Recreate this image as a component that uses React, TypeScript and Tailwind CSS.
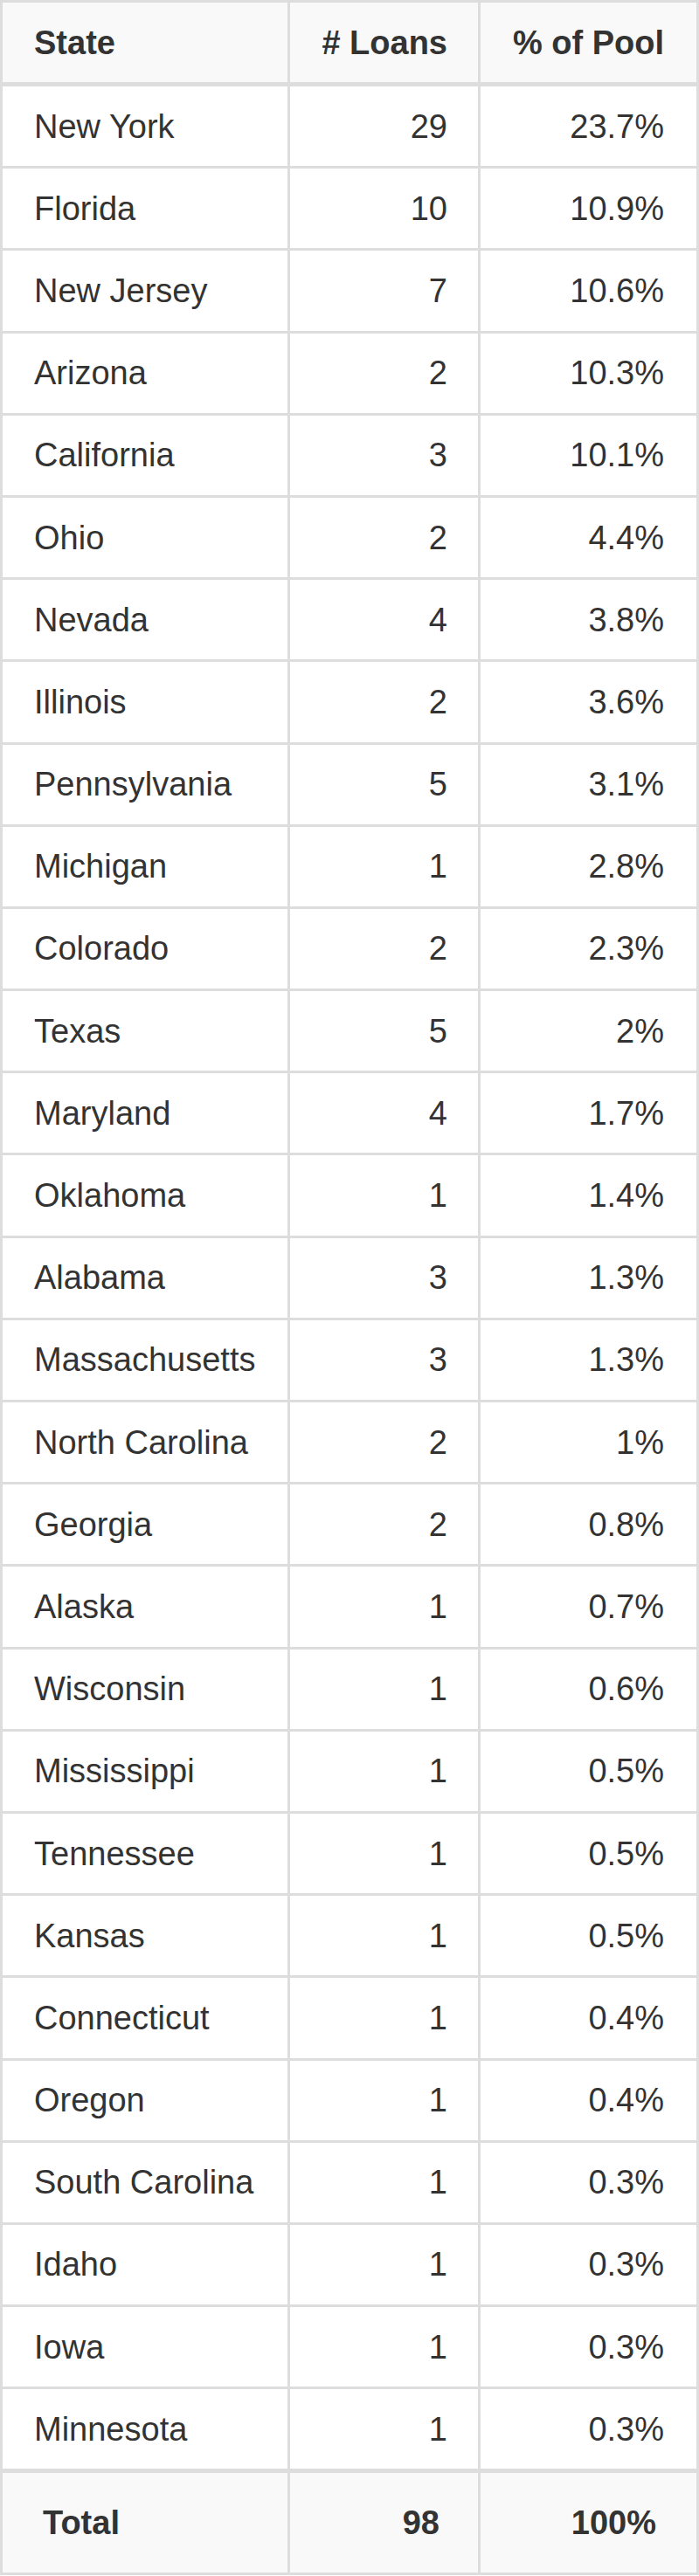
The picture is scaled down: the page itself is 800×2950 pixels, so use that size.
const rows: [string, number, string][] = [
  ["New York", 29, "23.7%"],
  ["Florida", 10, "10.9%"],
  ["New Jersey", 7, "10.6%"],
  ["Arizona", 2, "10.3%"],
  ["California", 3, "10.1%"],
  ["Ohio", 2, "4.4%"],
  ["Nevada", 4, "3.8%"],
  ["Illinois", 2, "3.6%"],
  ["Pennsylvania", 5, "3.1%"],
  ["Michigan", 1, "2.8%"],
  ["Colorado", 2, "2.3%"],
  ["Texas", 5, "2%"],
  ["Maryland", 4, "1.7%"],
  ["Oklahoma", 1, "1.4%"],
  ["Alabama", 3, "1.3%"],
  ["Massachusetts", 3, "1.3%"],
  ["North Carolina", 2, "1%"],
  ["Georgia", 2, "0.8%"],
  ["Alaska", 1, "0.7%"],
  ["Wisconsin", 1, "0.6%"],
  ["Mississippi", 1, "0.5%"],
  ["Tennessee", 1, "0.5%"],
  ["Kansas", 1, "0.5%"],
  ["Connecticut", 1, "0.4%"],
  ["Oregon", 1, "0.4%"],
  ["South Carolina", 1, "0.3%"],
  ["Idaho", 1, "0.3%"],
  ["Iowa", 1, "0.3%"],
  ["Minnesota", 1, "0.3%"],
];

const cols = "grid grid-cols-[326px_215px_247px] gap-x-[3px]";

export default function App() {
  return (
    <div className="w-[800px] bg-[#dddddd] p-[3px] font-['Liberation_Sans',Arial,sans-serif] text-[38px] leading-none text-[#333333]">
      {/* header */}
      <div className={`${cols} h-[91px] font-bold`}>
        <div className="flex items-center bg-[#f9f9f9] pl-[36px]">State</div>
        <div className="flex items-center justify-end bg-[#f9f9f9] pr-[35px]"># Loans</div>
        <div className="flex items-center justify-end bg-[#f9f9f9] pr-[37px]">% of Pool</div>
      </div>

      <div className="mt-[5px] flex flex-col gap-y-[3px]">
        {rows.map(([state, loans, pct]) => (
          <div key={state} className={`${cols} h-[91.2px]`}>
            <div className="flex items-center bg-white pl-[36px]">{state}</div>
            <div className="flex items-center justify-end bg-white pr-[35px]">{loans}</div>
            <div className="flex items-center justify-end bg-white pr-[37px]">{pct}</div>
          </div>
        ))}
      </div>

      {/* total */}
      <div className={`${cols} mt-[5px] h-[114px] font-bold`}>
        <div className="flex items-center bg-[#f9f9f9] pl-[46px]">Total</div>
        <div className="flex items-center justify-end bg-[#f9f9f9] pr-[44px]">98</div>
        <div className="flex items-center justify-end bg-[#f9f9f9] pr-[46px]">100%</div>
      </div>
    </div>
  );
}
